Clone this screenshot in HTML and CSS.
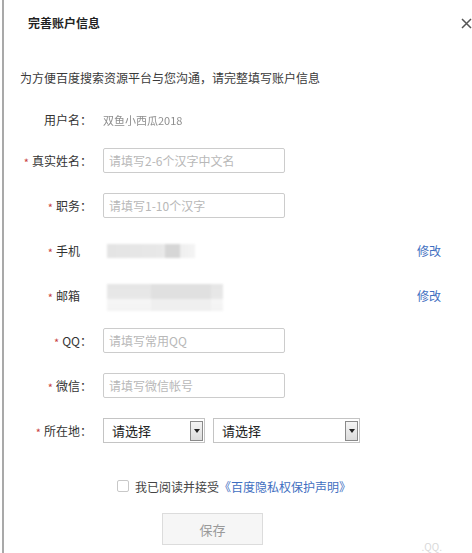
FILE: index.html
```html
<!DOCTYPE html>
<html lang="zh-CN">
<head>
<meta charset="utf-8">
<title>完善账户信息</title>
<link rel="stylesheet" href="styles.css">
</head>
<body>
<div class="frame">
  <span class="edge-mark edge-mark-a"></span>
  <span class="edge-mark edge-mark-b"></span>
  <div class="header">
    <span class="title">完善账户信息</span>
    <svg class="close" width="11" height="11" viewBox="0 0 11 11"><path d="M1 1 L10 10 M10 1 L1 10" stroke="#555" stroke-width="1.5" fill="none"/></svg>
  </div>
  <p class="intro">为方便百度搜索资源平台与您沟通，请完整填写账户信息</p>
  <div class="form">
    <div class="row row-user">
      <span class="label">用户名：</span>
      <span class="field user-value">双鱼小西瓜2018</span>
    </div>
    <div class="rows">
      <div class="row">
        <span class="label"><i class="star">*</i>真实姓名：</span>
        <input class="field input" type="text" placeholder="请填写2-6个汉字中文名">
      </div>
      <div class="row">
        <span class="label"><i class="star">*</i>职务：</span>
        <input class="field input" type="text" placeholder="请填写1-10个汉字">
      </div>
      <div class="row">
        <span class="label"><i class="star">*</i>手机<span class="hidden">：</span></span>
        <span class="field blur blur-phone"><span class="blur-dark"></span></span>
        <a class="edit">修改</a>
      </div>
      <div class="row">
        <span class="label"><i class="star">*</i>邮箱<span class="hidden">：</span></span>
        <span class="field blur blur-mail"><span class="blur-dark blur-dark-mail"></span></span>
        <a class="edit">修改</a>
      </div>
      <div class="row">
        <span class="label"><i class="star">*</i>QQ：</span>
        <input class="field input" type="text" placeholder="请填写常用QQ">
      </div>
      <div class="row">
        <span class="label"><i class="star">*</i>微信：</span>
        <input class="field input" type="text" placeholder="请填写微信帐号">
      </div>
      <div class="row">
        <span class="label"><i class="star">*</i>所在地：</span>
        <div class="field select select-a">
          <span class="select-text">请选择</span>
          <span class="arrow"><svg width="6" height="4" viewBox="0 0 6 4"><path d="M0 0 H6 L3 4 Z" fill="#222"/></svg></span>
        </div>
        <div class="select select-b">
          <span class="select-text">请选择</span>
          <span class="arrow"><svg width="6" height="4" viewBox="0 0 6 4"><path d="M0 0 H6 L3 4 Z" fill="#222"/></svg></span>
        </div>
      </div>
    </div>
    <div class="agree">
      <span class="checkbox"></span>
      <span class="agree-text">我已阅读并接受</span><a class="link">《百度隐私权保护声明》</a>
    </div>
    <div class="actions">
      <button class="save" type="button">保存</button>
    </div>
  </div>
  <span class="watermark">.QQ.</span>
</div>
</body>
</html>
```

FILE: styles.css
```css
html, body {
  margin: 0;
  padding: 0;
  background: #fff;
}

body {
  font-family: "Noto Sans CJK SC", "Noto Sans", sans-serif;
  font-size: 12px;
  color: #333;
}

.frame {
  position: relative;
  margin-left: 2px;
  border-left: 2px solid #a9a9a9;
  height: 553px;
  box-sizing: border-box;
  overflow: hidden;
}

.edge-mark {
  position: absolute;
  left: -2px;
  width: 2px;
  background: #4d6fa6;
}

.edge-mark-a { top: 20px; height: 10px; }
.edge-mark-b { top: 122px; height: 20px; background: #2f4f80; }

.header {
  height: 46px;
  display: flex;
  align-items: center;
  justify-content: space-between;
  padding-left: 24px;
}

.title {
  font-weight: bold;
  color: #222;
  line-height: 18px;
}

.close {
  display: block;
  margin-right: 0;
}

.intro {
  margin: 23px 0 0;
  padding-left: 16px;
  line-height: 18px;
  color: #3a3a3a;
}

.form {
  margin-top: 20px;
}

.row {
  display: flex;
  align-items: center;
  height: 25px;
}

.row-user {
  margin-bottom: 16px;
}

.rows {
  display: flex;
  flex-direction: column;
  gap: 20px;
}

.label {
  flex: none;
  width: 88px;
  text-align: right;
  white-space: nowrap;
  color: #333;
}

.star {
  font-style: normal;
  color: #c8413f;
  font-size: 11px;
  margin-right: 3px;
  position: relative;
  top: 1px;
}

.hidden {
  visibility: hidden;
}

.field {
  margin-left: 11px;
}

.user-value {
  color: #8e8e8e;
  font-size: 11px;
  filter: blur(0.7px);
}

.input {
  width: 182px;
  height: 25px;
  box-sizing: border-box;
  border: 1px solid #ccc;
  border-radius: 2px;
  padding: 0 5px;
  font-family: inherit;
  font-size: 12px;
  color: #333;
  outline: none;
}

.input::placeholder {
  color: #b8b8b8;
}

.blur {
  display: flex;
  justify-content: flex-end;
  margin-left: 15px;
  background: linear-gradient(90deg, #e4e4e4 0%, #e8e8e8 60%, #f4f4f4 100%);
  filter: blur(0.8px);
}

.blur-phone {
  width: 88px;
  height: 14px;
}

.blur-phone .blur-dark {
  width: 15px;
  margin-right: 15px;
  background: #d6d6d6;
}

.blur-mail {
  width: 116px;
  height: 27px;
  margin-top: 3px;
  background: linear-gradient(180deg, #e6e6e6 0%, #e8e8e8 55%, #f6f6f6 56%, #f3f3f3 100%);
}

.blur-dark-mail {
  width: 60px;
  margin-right: 12px;
  background: linear-gradient(180deg, #e0e0e0 0%, #e0e0e0 55%, #efefef 56%, #efefef 100%);
}

.edit {
  margin-left: auto;
  margin-right: 31px;
  color: #3f6fc1;
  cursor: pointer;
}

.select {
  position: relative;
  display: flex;
  align-items: center;
  height: 25px;
  box-sizing: border-box;
  border: 1px solid #c4c4c4;
  background: #fff;
}

.select-a {
  width: 102px;
}

.select-b {
  width: 147px;
  margin-left: 8px;
}

.select-text {
  padding-left: 8px;
  font-size: 13px;
  color: #222;
}

.arrow {
  margin-left: auto;
  margin-right: 1px;
  width: 13px;
  height: 20px;
  box-sizing: border-box;
  border: 1px solid #8a8a8a;
  background: linear-gradient(180deg, #f4f4f4 0%, #dcdcdc 100%);
  display: flex;
  align-items: center;
  justify-content: center;
}

.arrow svg {
  display: block;
}

.agree {
  display: flex;
  align-items: center;
  margin-top: 36px;
  padding-left: 113px;
  height: 14px;
}

.checkbox {
  width: 12px;
  height: 12px;
  box-sizing: border-box;
  border: 1px solid #c8c8c8;
  border-radius: 2px;
  margin-right: 6px;
}

.agree-text {
  color: #444;
}

.link {
  color: #3f6fc1;
  cursor: pointer;
}

.actions {
  margin-top: 20px;
  padding-left: 158px;
}

.save {
  width: 101px;
  height: 32px;
  border: 1px solid #dcdcdc;
  background: #f6f6f6;
  color: #9a9a9a;
  font-family: inherit;
  font-size: 13px;
  padding: 0;
}

.watermark {
  position: absolute;
  right: 30px;
  bottom: 0;
  font-size: 10px;
  line-height: 12px;
  color: #d8d8d8;
}
```
